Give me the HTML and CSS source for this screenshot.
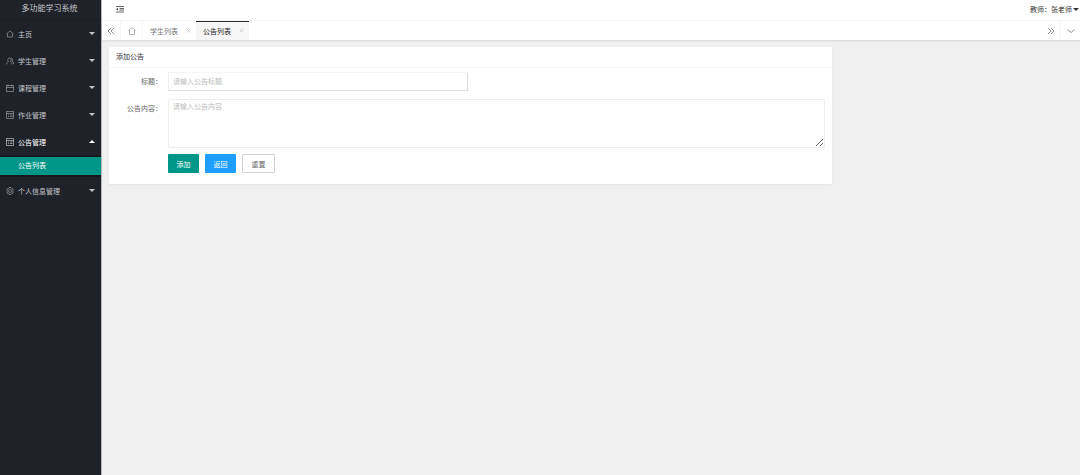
FILE: index.html
```
<!DOCTYPE html>
<html lang="zh-CN">
<head>
    <meta charset="utf-8">
    <meta name="viewport" content="width=device-width, initial-scale=1">
    <title>多功能学习系统</title>
    <link rel="stylesheet" href="styles.css">
</head>
<body>
    <div class="layout">
        <aside class="side">
            <div class="logo">多功能学习系统</div>
            <nav>
                <ul class="menu">
                    <li>
                        <a href="#" class="menu-item">
                            <svg class="icon" viewBox="0 0 16 16"><path d="M1 8l7-6 7 6M3 7v7h10V7"/></svg>
                            <span>主页</span><i class="caret"></i>
                        </a>
                    </li>
                    <li>
                        <a href="#" class="menu-item">
                            <svg class="icon" viewBox="0 0 16 16"><path d="M1 15c0-4 2-5 4-6-3-3-1-7 2-7s5 4 2 7c2 1 3 2 3 6M10 2c3 0 4 4 2 6 2 1 3 3 3 6"/></svg>
                            <span>学生管理</span><i class="caret"></i>
                        </a>
                    </li>
                    <li>
                        <a href="#" class="menu-item">
                            <svg class="icon" viewBox="0 0 16 16"><path d="M1 3h14v12H1zM1 7h14M4 1v4M12 1v4"/></svg>
                            <span>课程管理</span><i class="caret"></i>
                        </a>
                    </li>
                    <li>
                        <a href="#" class="menu-item">
                            <svg class="icon" viewBox="0 0 16 16"><path d="M1 1h14v14H1zM1 5h14M4 8h2M8 8h5M4 11h2M8 11h5"/></svg>
                            <span>作业管理</span><i class="caret"></i>
                        </a>
                    </li>
                    <li>
                        <a href="#" class="menu-item open">
                            <svg class="icon" viewBox="0 0 16 16"><path d="M1 1h14v14H1zM1 5h14M4 8h2M8 8h5M4 11h2M8 11h5"/></svg>
                            <span>公告管理</span><i class="caret up"></i>
                        </a>
                        <div class="submenu">
                            <a href="#" class="active">公告列表</a>
                        </div>
                    </li>
                    <li>
                        <a href="#" class="menu-item">
                            <svg class="icon" viewBox="0 0 16 16"><path d="M6 1h4l1 2 3 1v3l1 1-1 1v3l-3 1-1 2H6l-1-2-3-1V9L1 8l1-1V4l3-1z"/><circle cx="8" cy="8" r="3"/></svg>
                            <span>个人信息管理</span><i class="caret"></i>
                        </a>
                    </li>
                </ul>
            </nav>
        </aside>

        <div class="body">
            <header class="header">
                <button type="button" class="icon-btn" aria-label="收起菜单">
                    <svg class="icon" viewBox="0 0 16 16"><path d="M0 3h16M7 7h9M7 10h9M0 14h16"/><path class="solid" d="M4 6v5L0 8z"/></svg>
                </button>
                <a href="#" class="user">教师：张老师<i class="caret"></i></a>
            </header>

            <div class="tabs">
                <button type="button" class="tab-ctrl" aria-label="向左">
                    <svg class="icon" viewBox="0 0 16 16"><path d="M8 2L2 8l6 6M14 2L8 8l6 6"/></svg>
                </button>
                <button type="button" class="tab-ctrl home" aria-label="首页">
                    <svg class="icon" viewBox="0 0 16 16"><path d="M1 7l7-6 7 6M3 6v9h10V6"/></svg>
                </button>
                <a href="#" class="tab">学生列表
                    <svg class="close" viewBox="0 0 8 8"><path d="M1 1l6 6M7 1L1 7"/></svg>
                </a>
                <a href="#" class="tab current">公告列表
                    <svg class="close" viewBox="0 0 8 8"><path d="M1 1l6 6M7 1L1 7"/></svg>
                </a>
                <button type="button" class="tab-ctrl right" aria-label="向右">
                    <svg class="icon" viewBox="0 0 16 16"><path d="M2 2l6 6-6 6M8 2l6 6-6 6"/></svg>
                </button>
                <button type="button" class="tab-ctrl down" aria-label="更多">
                    <svg class="icon" viewBox="0 0 16 16"><path d="M1 5l7 6 7-6"/></svg>
                </button>
            </div>

            <main class="main">
                <section class="card">
                    <h1 class="card-header">添加公告</h1>
                    <form class="form" action="#" method="post">
                        <div class="field">
                            <label for="title">标题：</label>
                            <input type="text" id="title" name="title" placeholder="请输入公告标题">
                        </div>
                        <div class="field">
                            <label for="content">公告内容：</label>
                            <textarea id="content" name="content" placeholder="请输入公告内容"></textarea>
                        </div>
                        <div class="actions">
                            <button type="submit" class="btn">添加</button>
                            <button type="button" class="btn btn-blue">返回</button>
                            <button type="reset" class="btn btn-plain">重置</button>
                        </div>
                    </form>
                </section>
            </main>
        </div>
    </div>
</body>
</html>
```
FILE: styles.css
```
*, *:before, *:after{
    box-sizing:border-box;
}
body{
    margin:0;
    font-family:"Liberation Sans", "Noto Sans CJK SC", sans-serif;
    font-size:7px;
    color:#333;
    background:#f0f0f0;
}
a{
    color:inherit;
    text-decoration:none;
}
button,
input,
textarea{
    font:inherit;
}
button{
    padding:0;
    border:none;
    background:none;
    color:inherit;
    cursor:pointer;
}
.layout{
    display:flex;
    min-height:100vh;
}
.icon{
    width:8px;
    height:8px;
    fill:none;
    stroke:currentColor;
    stroke-width:1.5;
}
    .icon .solid{
        fill:currentColor;
        stroke:none;
    }
.caret{
    border:3px solid transparent;
    border-top-color:currentColor;
    border-bottom-width:0;
}
    .caret.up{
        border-top-width:0;
        border-bottom:3px solid currentColor;
    }

/* sidebar */
.side{
    flex:none;
    width:102px;
    background:#20222a;
    color:#c4c5c8;
    border-right:1px solid #b4b5b7;
}
.logo{
    height:20px;
    line-height:18px;
    font-size:8px;
    text-align:center;
    padding-right:2px;
    border-bottom:1px solid #1b1d24;
}
.menu{
    margin:0;
    padding:0;
    list-style:none;
}
.menu-item{
    display:flex;
    align-items:center;
    gap:4px;
    height:27px;
    padding:0 6px;
}
    .menu-item .icon{
        stroke-width:1;
    }
    .menu-item .caret{
        margin-left:auto;
    }
    .menu-item.open{
        color:#fff;
    }
.submenu{
    padding:2px 0;
    background:#16181d;
}
    .submenu a{
        display:block;
        height:18px;
        line-height:18px;
        padding-left:18px;
    }
    .submenu a.active{
        background:#009688;
        color:#fff;
    }

/* top bar and tabs */
.body{
    flex:1;
    min-width:0;
}
.header{
    display:flex;
    align-items:center;
    justify-content:space-between;
    height:20px;
    padding:0 1px 2px 14px;
    background:#fff;
}
.icon-btn{
    display:flex;
}
.user{
    display:flex;
    align-items:center;
    gap:1px;
}
.tabs{
    display:flex;
    height:20px;
    background:#fff;
    border-top:1px solid #f6f6f6;
    box-shadow:0 1px 2px rgba(0,0,0,0.1);
}
.tab-ctrl{
    display:flex;
    align-items:center;
    justify-content:center;
    width:19px;
    border-right:1px solid #f6f6f6;
    color:#666;
}
    .tab-ctrl.home{
        width:22px;
        color:#999;
    }
    .tab-ctrl.right{
        margin-left:auto;
    }
    .tab-ctrl.down{
        border-right:none;
    }
.tab{
    display:flex;
    align-items:center;
    justify-content:space-between;
    width:53px;
    padding:0 5px 0 7px;
    color:#777;
}
    .tab.current{
        background:#f6f6f6;
        color:#222;
        box-shadow:inset 0 1px #292b34;
    }
.close{
    width:5px;
    height:5px;
    stroke:#bbb;
    fill:none;
}

/* form card */
.main{
    padding:7px;
}
.card{
    width:75%;
    background:#fff;
    border-radius:1px;
    box-shadow:0 1px 2px rgba(0,0,0,0.05);
}
.card-header{
    margin:0;
    height:21px;
    line-height:20px;
    padding:0 7px;
    font-size:7px;
    font-weight:normal;
    border-bottom:1px solid #f6f6f6;
}
.form{
    padding:4px 7px 11px 7px;
}
.field{
    display:flex;
    margin-bottom:8px;
}
    .field label{
        flex:none;
        width:52px;
        padding-right:6px;
        line-height:19px;
        text-align:right;
        color:#666;
    }
    .field input,
    .field textarea{
        border:1px solid #eee;
        border-radius:1px;
        background:#fff;
        padding:0 4px;
        outline:none;
    }
    .field input{
        width:300px;
        height:19px;
        border-color:#f4f4f4 #ddd #ddd #eee;
    }
    .field textarea{
        flex:1;
        height:49px;
        padding:2px 4px;
        line-height:10px;
        resize:vertical;
    }
    .field ::placeholder{
        color:#bbb;
    }
.field:nth-child(2){
    margin-bottom:6px;
}
.actions{
    display:flex;
    gap:6px;
    padding-left:52px;
}
.btn{
    width:31px;
    height:19px;
    border-radius:1px;
    background:#009688;
    color:#fff;
}
    .btn-blue{
        background:#1e9fff;
    }
    .btn-plain{
        width:33px;
        background:#fff;
        border:1px solid #d2d2d2;
        color:#666;
    }
```
